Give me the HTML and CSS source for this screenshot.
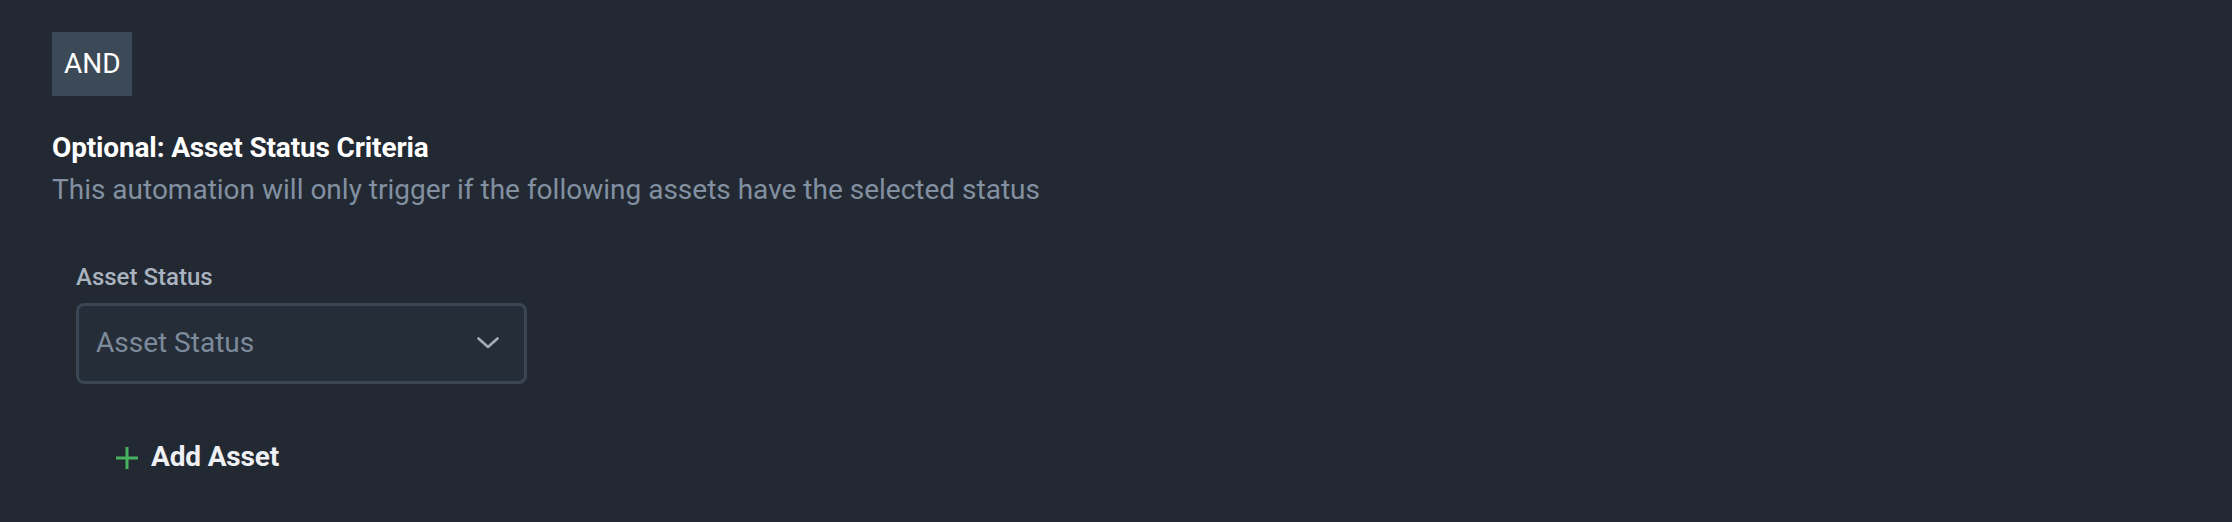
FILE: index.html
```html
<!DOCTYPE html>
<html lang="en">
<head>
<meta charset="utf-8">
<title>Asset Status Criteria</title>
<link rel="stylesheet" href="styles.css">
</head>
<body>
<main class="page">
  <div class="and-badge">AND</div>
  <section class="criteria">
    <h2 class="criteria-title">Optional: Asset Status Criteria</h2>
    <p class="criteria-desc">This automation will only trigger if the following assets have the selected status</p>
    <div class="field">
      <label class="field-label">Asset Status</label>
      <div class="select">
        <span class="select-placeholder">Asset Status</span>
        <svg class="chevron" width="22" height="12" viewBox="0 0 22 12" fill="none">
          <path d="M1.5 1.5 L11 10 L20.5 1.5" stroke="#a3adba" stroke-width="2.6" stroke-linecap="round" stroke-linejoin="round"/>
        </svg>
      </div>
    </div>
    <button class="add-btn" type="button">
      <svg class="plus" width="22" height="22" viewBox="0 0 22 22" fill="none">
        <path d="M11 0 V22 M0 11 H22" stroke="#46b15f" stroke-width="3"/>
      </svg>
      <span>Add Asset</span>
    </button>
  </section>
</main>
</body>
</html>
```

FILE: styles.css
```css
html, body {
  margin: 0;
  padding: 0;
  background: #222932;
}
body {
  font-family: Roboto, "Liberation Sans", sans-serif;
  color: #eef0f3;
}
.page {
  padding: 32px 52px;
  display: flex;
  flex-direction: column;
  align-items: flex-start;
}
.and-badge {
  background: #3c4a57;
  color: #ffffff;
  font-size: 28px;
  line-height: 64px;
  height: 64px;
  padding: 0 12px;
  box-sizing: border-box;
  width: 80px;
  text-align: center;
}
.criteria {
  margin-top: 31px;
  display: flex;
  flex-direction: column;
  align-items: flex-start;
}
.criteria-title {
  margin: 0;
  font-size: 28px;
  font-weight: 700;
  line-height: 42px;
  letter-spacing: -0.15px;
  color: #ffffff;
}
.criteria-desc {
  margin: 0;
  font-size: 28px;
  font-weight: 400;
  line-height: 41px;
  color: #8290a1;
}
.field {
  margin-top: 51px;
  margin-left: 24px;
  display: flex;
  flex-direction: column;
  gap: 10px;
}
.field-label {
  font-size: 24px;
  font-weight: 500;
  line-height: 32px;
  color: #a9b3bf;
}
.select {
  width: 451px;
  height: 81px;
  box-sizing: border-box;
  border: 3px solid #3a4654;
  border-radius: 8px;
  background: #252e38;
  display: flex;
  align-items: center;
  justify-content: space-between;
  padding: 0 25px 0 17px;
}
.select-placeholder {
  font-size: 28px;
  line-height: 40px;
  color: #7d8a9a;
  margin-top: -2px;
}
.chevron {
  display: block;
  margin-top: -2px;
}
.add-btn {
  margin-top: 53px;
  margin-left: 64px;
  background: transparent;
  border: 0;
  padding: 0;
  display: flex;
  align-items: center;
  gap: 13px;
  font-family: Roboto, "Liberation Sans", sans-serif;
  font-size: 28px;
  font-weight: 700;
  line-height: 40px;
  letter-spacing: -0.15px;
  color: #eef0f3;
  cursor: pointer;
}
.plus {
  display: block;
  margin-top: 1px;
}
```
